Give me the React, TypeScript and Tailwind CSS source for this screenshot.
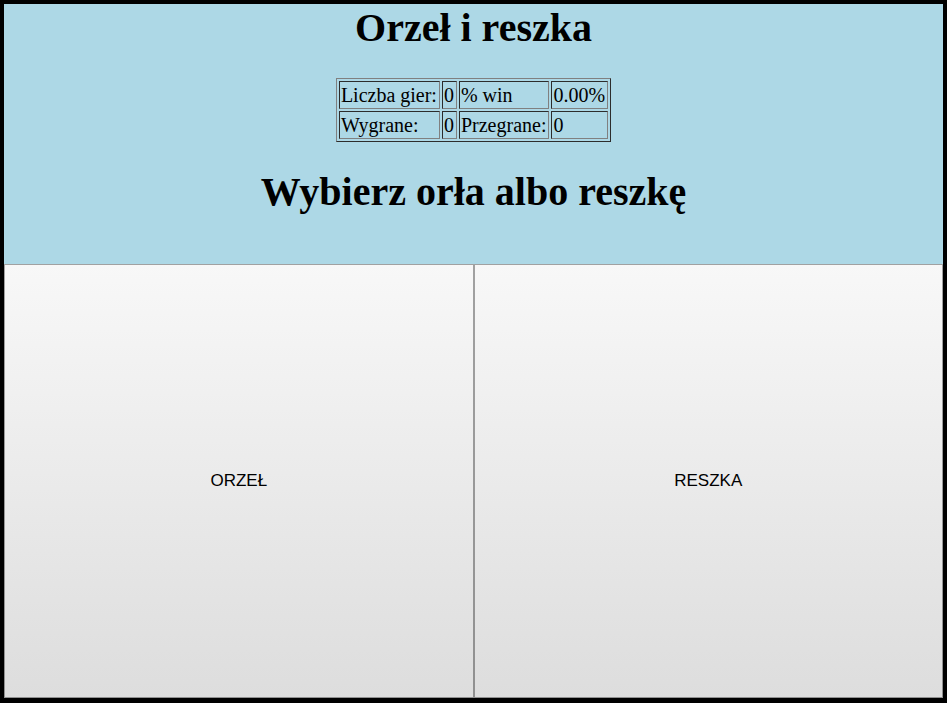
import { useState } from "react";

const cell =
  "border border-t-[#2c2c2c] border-r-[#808080] border-b-[#808080] border-l-[#2c2c2c] py-px pl-px pr-0.5";

const choice =
  "flex-1 border border-black/35 bg-linear-to-b from-[#f8f8f8] to-[#dddddd] bg-origin-border text-center font-['Liberation_Sans',Arial,sans-serif] text-[17px] text-black";

export default function App() {
  const [wins, setWins] = useState(0);
  const [losses, setLosses] = useState(0);
  const games = wins + losses;
  const rate = games ? (wins / games) * 100 : 0;

  const play = () => {
    if (Math.random() < 0.5) setWins(wins + 1);
    else setLosses(losses + 1);
  };

  return (
    <main className="flex min-h-screen flex-col border-4 border-b-5 border-black bg-[#add8e6] font-['Liberation_Serif','Times_New_Roman',serif] text-xl text-black">
      <header className="flex flex-col items-center gap-[26px] pb-12">
        <h1 className="text-[40px] leading-12 font-bold">Orzeł i reszka</h1>
        <table className="border-separate border-spacing-[2px] border border-t-[#808080] border-r-[#2c2c2c] border-b-[#2c2c2c] border-l-[#808080] leading-6">
          <tbody>
            <tr>
              <td className={cell}>Liczba gier:</td>
              <td className={cell}>{games}</td>
              <td className={cell}>% win</td>
              <td className={cell}>{rate.toFixed(2)}%</td>
            </tr>
            <tr>
              <td className={cell}>Wygrane:</td>
              <td className={cell}>{wins}</td>
              <td className={cell}>Przegrane:</td>
              <td className={cell}>{losses}</td>
            </tr>
          </tbody>
        </table>
        <h2 className="text-[40px] leading-12 font-bold">Wybierz orła albo reszkę</h2>
      </header>
      <div className="flex flex-1">
        <button type="button" onClick={play} className={choice}>ORZEŁ</button>
        <button type="button" onClick={play} className={choice}>RESZKA</button>
      </div>
    </main>
  );
}
